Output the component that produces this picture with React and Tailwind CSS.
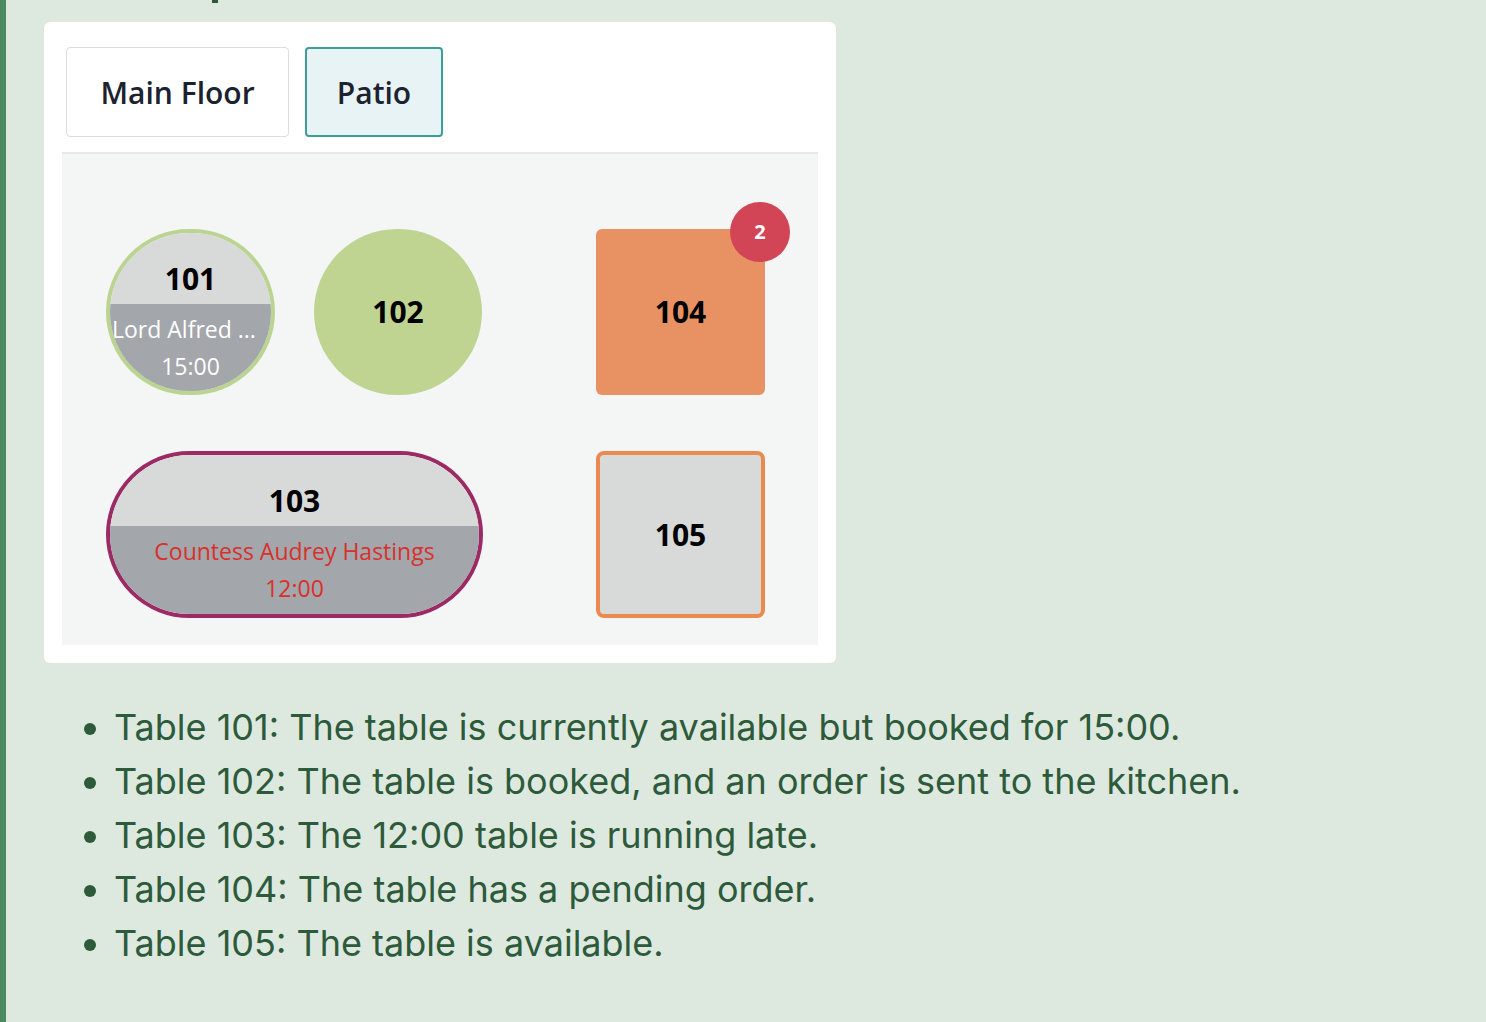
import React from "react";

const notes = [
  "Table 101: The table is currently available but booked for 15:00.",
  "Table 102: The table is booked, and an order is sent to the kitchen.",
  "Table 103: The 12:00 table is running late.",
  "Table 104: The table has a pending order.",
  "Table 105: The table is available.",
];

const label = "font-['Open_Sans',sans-serif]";

export default function App() {
  return (
    <div className="min-h-screen w-full bg-[#dde9df] border-l-[6px] border-[#4b8a5f] relative">
      {/* bit of the heading above, cut off */}
      <div className="absolute left-[206px] top-0 w-[6px] h-[3px] bg-[#2d5a3a]" />
      <div className="pt-[22px] pl-[38px]">
        <div className="w-[792px] bg-white rounded-[6px] p-[18px] pb-[18px]">
          {/* tabs */}
          <div className={`flex gap-4 pl-1 pt-[7px] pb-[15px] border-b-2 border-[#e7e8e8] ${label}`}>
            <button className="w-[223px] h-[90px] rounded-[4px] border border-[#dcdcdc] bg-white text-[30px] text-[#1c2230] font-semibold">
              Main Floor
            </button>
            <button className="w-[138px] h-[90px] rounded-[4px] border-2 border-[#3d9d9a] bg-[#e7f3f4] text-[30px] text-[#1c2230] font-semibold">
              Patio
            </button>
          </div>
          {/* floor */}
          <div className={`relative h-[491px] bg-[#f4f5f5] ${label}`}>
            {/* 101 */}
            <div className="absolute left-[44px] top-[75px] w-[169px] h-[166px] rounded-full border-[4px] border-[#bcd492] overflow-hidden flex flex-col">
              <div className="h-[71px] bg-[#d8d9d9] flex items-end justify-center pb-[10px]">
                <span className="text-[30px] font-bold text-black leading-none">101</span>
              </div>
              <div className="flex-1 bg-[#a3a6aa] text-white text-[23px] leading-none">
                <div className="pl-[2px] pt-[14px] whitespace-nowrap">Lord Alfred ...</div>
                <div className="text-center pt-[14px]">15:00</div>
              </div>
            </div>
            {/* 102 */}
            <div className="absolute left-[252px] top-[75px] w-[168px] h-[166px] rounded-full bg-[#c0d492] flex items-center justify-center">
              <span className="text-[30px] font-bold text-black leading-none">102</span>
            </div>
            {/* 104 */}
            <div className="absolute left-[534px] top-[75px] w-[169px] h-[166px] rounded-[6px] bg-[#e89263] flex items-center justify-center">
              <span className="text-[30px] font-bold text-black leading-none">104</span>
              <div className="absolute -right-[25px] -top-[27px] w-[60px] h-[60px] rounded-full bg-[#d24556] flex items-center justify-center">
                <span className="text-[20px] font-bold text-white leading-none">2</span>
              </div>
            </div>
            {/* 103 */}
            <div className="absolute left-[44px] top-[297px] w-[377px] h-[167px] rounded-full border-[4px] border-[#9c2a64] overflow-hidden flex flex-col">
              <div className="h-[71px] bg-[#d8d9d9] flex items-end justify-center pb-[10px]">
                <span className="text-[30px] font-bold text-black leading-none">103</span>
              </div>
              <div className="flex-1 bg-[#a3a6aa] text-[#d9302c] text-[23px] leading-none text-center">
                <div className="pt-[14px] whitespace-nowrap">Countess Audrey Hastings</div>
                <div className="pt-[14px]">12:00</div>
              </div>
            </div>
            {/* 105 */}
            <div className="absolute left-[534px] top-[297px] w-[169px] h-[167px] rounded-[8px] border-[4px] border-[#ea8a4e] bg-[#d8d9d9] flex items-center justify-center">
              <span className="text-[30px] font-bold text-black leading-none">105</span>
            </div>
          </div>
        </div>

        <ul className="mt-[37px] ml-[34px] list-disc pl-[36px] text-[36px] leading-[54px] text-[#2d5a3a] font-['Inter',sans-serif]">
          {notes.map((n) => (
            <li key={n} className="marker:text-[#2d5a3a]">{n}</li>
          ))}
        </ul>
      </div>
    </div>
  );
}
